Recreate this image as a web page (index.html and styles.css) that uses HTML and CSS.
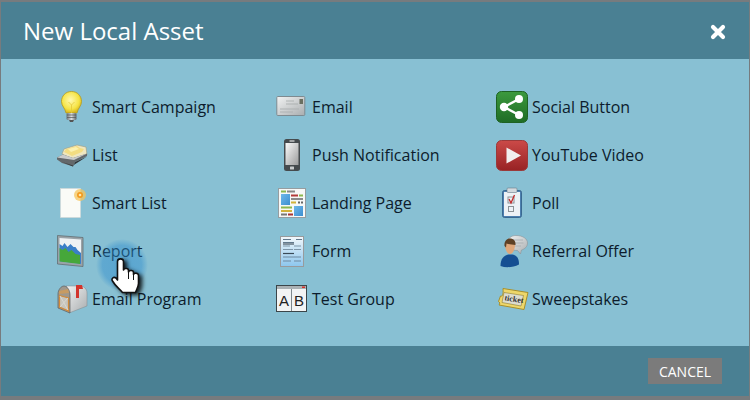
FILE: index.html
```html
<!DOCTYPE html>
<html lang="en">
<head>
<meta charset="utf-8">
<title>New Local Asset</title>
<link rel="stylesheet" href="styles.css">
</head>
<body>
<div class="dialog">
  <header class="head">
    <h1 class="title">New Local Asset</h1>
    <svg class="close" width="16" height="16" viewBox="0 0 16 16"><path d="M3 3L13 13M13 3L3 13" stroke="#fff" stroke-width="4.2" stroke-linecap="round"/></svg>
  </header>
  <main class="grid">
    <div class="item"><svg class="icon" viewBox="0 0 36 36">
      <defs>
        <radialGradient id="bulb" cx=".45" cy=".4" r=".6"><stop offset="0" stop-color="#fff9b0"/><stop offset=".7" stop-color="#f6e445"/><stop offset="1" stop-color="#d9b81e"/></radialGradient>
        <linearGradient id="metal" x1="0" x2="1" y1="0" y2="0"><stop offset="0" stop-color="#6d7478"/><stop offset=".5" stop-color="#d8dcdd"/><stop offset="1" stop-color="#5e6468"/></linearGradient>
        <linearGradient id="grn" x1="0" x2="0" y1="0" y2="1"><stop offset="0" stop-color="#3c9a3e"/><stop offset="1" stop-color="#1f6c25"/></linearGradient>
        <linearGradient id="red" x1="0" x2="0" y1="0" y2="1"><stop offset="0" stop-color="#cb4a48"/><stop offset="1" stop-color="#982224"/></linearGradient>
        <linearGradient id="sil" x1="0" x2="1" y1="0" y2="1"><stop offset="0" stop-color="#f2f3f3"/><stop offset="1" stop-color="#a9adaf"/></linearGradient>
        <linearGradient id="scr" x1="0" x2="1" y1="0" y2="1"><stop offset="0" stop-color="#fafafa"/><stop offset="1" stop-color="#9c9c9c"/></linearGradient>
        <linearGradient id="blu" x1="0" x2="1" y1="0" y2="1"><stop offset="0" stop-color="#6db7ea"/><stop offset="1" stop-color="#3d8fd0"/></linearGradient>
        <linearGradient id="pale" x1="0" x2="0" y1="0" y2="1"><stop offset="0" stop-color="#f3f8fb"/><stop offset="1" stop-color="#8cc6ee"/></linearGradient>
      </defs>
      <path d="M15.500 2.500C9.500 2.500 5.500 7 5.500 12.500c0 4.500 3.500 6.500 4.500 11.500h11c1-5 4.500-7 4.500-11.500 0-5.500-4-10-10-10z" fill="url(#bulb)" stroke="#b59a1c" stroke-width=".8"/>
      <path d="M12.500 13l3 3 3-3M15.500 16v8" fill="none" stroke="#e3c93a" stroke-width=".8"/>
      <rect x="10.500" y="24" width="10" height="7" rx="1.500" fill="url(#metal)"/>
      <path d="M11 26h9M11 28.500h9" stroke="#555" stroke-width=".7"/>
      <path d="M13 31h5l-1 2h-3z" fill="#555"/>
    </svg><span class="label">Smart Campaign</span></div>
    <div class="item"><svg class="icon" viewBox="0 0 36 36">
      <path d="M6 17l2-5 13-4 9 2 1 8-13 5z" fill="#efe7c0" stroke="#9d9a80" stroke-width=".6"/>
      <path d="M8 15l2-3 11-3 3 2 4 1-2 3-10 4z" fill="#f3dd82"/>
      <path d="M12 12l8-2 3 2-8 3z" fill="#fbf1b0"/>
      <path d="M1 20.500L7 17.500l10 3.500 14-4.500v2.500L19 25 17 29.500 6 26 1 22.500z" fill="#63686b"/>
      <path d="M1 20.500L7 17.500l10 3.500 14-4.500-13 6.500z" fill="#c9cbcc"/>
      <path d="M6 25l11 3.500 14-9-12 5.500-2 4.500z" fill="#33373a"/>
    </svg><span class="label">List</span></div>
    <div class="item"><svg class="icon" viewBox="0 0 36 36">
      <rect x="4.500" y="3.500" width="20" height="29" fill="#fafbf7" stroke="#d4d8d6" stroke-width=".6"/>
      <circle cx="24" cy="10" r="6" fill="#f5c65c" opacity=".75"/>
      <circle cx="24" cy="10" r="3" fill="#f39a1f"/>
      <circle cx="24" cy="10" r="1.300" fill="#ffe9a8"/>
    </svg><span class="label">Smart List</span></div>
    <div class="item"><svg class="icon" viewBox="0 0 36 36">
      <path d="M1.500 2.500L27 4.500v29L1.500 31z" fill="#9aa3a8" stroke="#5c6468" stroke-width=".7"/>
      <path d="M3.500 5L25 6.500V31L3.500 28.500z" fill="#eef2f4"/>
      <path d="M3.500 11l3 2 2-3 3 4 3-3 3 3 2 0 2 3 3.500 3V31L3.500 28.500z" fill="#3a7fc8"/>
      <path d="M3.500 15l3 2 3-2 3 4 3-2 4 4 4.500 1V31L3.500 28.500z" fill="#46a73a"/>
    </svg><span class="label">Report</span></div>
    <div class="item"><svg class="icon" viewBox="0 0 36 36">
      <path d="M10 5h14c4 0 7 3 7 7v13L13 32V14c0-4-2-8-3-9z" fill="url(#sil)" stroke="#81878a" stroke-width=".5"/>
      <path d="M2 13c0-4 3-8 6-8s6 4 6 9v18L2 27z" fill="#a0988c" stroke="#5d5d5d" stroke-width=".7"/>
      <path d="M3.500 14.500L12.500 17v13L3.500 26z" fill="#c7c5bd" stroke="#d08a3a" stroke-width="1.200"/>
      <path d="M4 15l8 14M12 17L4 26" stroke="#d9d7d0" stroke-width="1"/>
      <path d="M3 10l9-2 1 4-10 1z" fill="#c79b62"/>
      <path d="M20 4h6l1 4h-4l0 9h-3z" fill="#d2342c"/>
    </svg><span class="label">Email Program</span></div>

    <div class="item"><svg class="icon" viewBox="0 0 36 36">
      <rect x=".8" y="7.500" width="28" height="19" rx="1" fill="url(#sil)" stroke="#7e8a90" stroke-width="1"/>
      <path d="M4 20h19M4 23h13" stroke="#aeb2b3" stroke-width="1"/>
      <path d="M10 12h8M10 15h12" stroke="#a5a9aa" stroke-width=".8"/>
      <rect x="23.500" y="10" width="3.500" height="5" fill="#6a6f60"/>
    </svg><span class="label">Email</span></div>
    <div class="item"><svg class="icon" viewBox="0 0 36 36">
      <rect x="8" y="2" width="16" height="32" rx="2.500" fill="#454a4d"/>
      <rect x="9.500" y="6" width="13" height="22" fill="url(#scr)"/>
      <rect x="13.500" y="3.500" width="5" height="1" fill="#fff"/>
      <rect x="14" y="29.500" width="4" height="3" rx=".5" fill="#c8cbcc"/>
    </svg><span class="label">Push Notification</span></div>
    <div class="item"><svg class="icon" viewBox="0 0 36 36">
      <rect x="2.500" y="3.500" width="27" height="29" fill="#f7f8f7" stroke="#969da0"/>
      <rect x="5" y="5.500" width="5" height="2" fill="#8cb74f"/><rect x="11" y="5.500" width="8" height="2" fill="#888"/>
      <rect x="5" y="9" width="9" height="11" fill="url(#blu)"/>
      <rect x="15" y="9.500" width="7" height="2" fill="#b33a3a"/><rect x="23" y="9.500" width="4" height="2" fill="#8cb74f"/>
      <rect x="15" y="13" width="12" height="2" fill="#8a8a8a"/>
      <rect x="15" y="16.500" width="5" height="2" fill="#d2b23b"/><rect x="22" y="16.500" width="2" height="2" fill="#666"/><rect x="25" y="16.500" width="2" height="2" fill="#666"/>
      <rect x="5" y="21.500" width="11" height="2" fill="#8cb74f"/>
      <rect x="5" y="25" width="11" height="2" fill="#d2b23b"/>
      <rect x="5" y="28.500" width="6" height="2" fill="#777"/><rect x="12" y="28.500" width="5" height="2" fill="#a83333"/>
      <rect x="18" y="21" width="9" height="10" fill="url(#blu)"/>
    </svg><span class="label">Landing Page</span></div>
    <div class="item"><svg class="icon" viewBox="0 0 36 36">
      <rect x="4.500" y="3.500" width="23" height="30" fill="url(#pale)" stroke="#989b9d"/>
      <path d="M7 6.500h8M20 6.500h6M7 9.500h11" stroke="#62798c" stroke-width="1.200"/>
      <path d="M7 13h7M18 13h7M7 16.500h10M18 16.500h7" stroke="#7d95a8" stroke-width="1"/>
      <path d="M7 20.500h11" stroke="#3a4a58" stroke-width="1.200"/>
      <path d="M7 24h18M7 28h8M18 28h7" stroke="#6c89a0" stroke-width="1"/>
      <path d="M7 11h11" stroke="#2c3a46" stroke-width="1"/>
    </svg><span class="label">Form</span></div>
    <div class="item"><svg class="icon" viewBox="0 0 36 36">
      <rect x=".5" y="4.500" width="30" height="26" fill="#f2f4f4" stroke="#3b4549"/>
      <rect x="1" y="5" width="29" height="3" fill="#aab1b4"/>
      <rect x="26" y="5.500" width="3" height="1.500" fill="#d8312a"/>
      <path d="M15.500 8v22" stroke="#7f888c"/>
      <text class="ab" x="3" y="24.500">A</text><text class="ab" x="18" y="24.500">B</text>
    </svg><span class="label">Test Group</span></div>

    <div class="item"><svg class="icon" viewBox="0 0 36 36">
      <rect x=".5" y="2.500" width="31" height="31" rx="5" fill="url(#grn)" stroke="#1e6223"/>
      <path d="M8 18L23 10M8 18l15 8" stroke="#fff" stroke-width="2.400"/>
      <circle cx="8" cy="18" r="4.200" fill="#fff"/><circle cx="23" cy="10" r="4" fill="#fff"/><circle cx="23" cy="26" r="4" fill="#fff"/>
    </svg><span class="label">Social Button</span></div>
    <div class="item"><svg class="icon" viewBox="0 0 36 36">
      <rect x=".5" y="3.500" width="31" height="30" rx="5" fill="url(#red)" stroke="#9a3a3a"/>
      <path d="M10.500 10.500L25 18.500 10.500 26.500z" fill="#f1eeee"/>
    </svg><span class="label">YouTube Video</span></div>
    <div class="item"><svg class="icon" viewBox="0 0 36 36">
      <rect x="6.500" y="5.500" width="19" height="27" rx="2" fill="#4d80b0" stroke="#2f5a85" stroke-width=".8"/>
      <rect x="8" y="7" width="16" height="24" fill="#edf2f6"/>
      <rect x="11" y="3" width="10" height="4.500" rx="1" fill="#d3dadf" stroke="#6a7b88" stroke-width=".6"/>
      <rect x="12" y="12" width="6" height="6" fill="none" stroke="#8b9296"/>
      <path d="M13 14l2 4 3.500-8" fill="none" stroke="#c32a2a" stroke-width="1.300"/>
      <rect x="12.500" y="21.500" width="5" height="5" fill="none" stroke="#8b9296"/>
    </svg><span class="label">Poll</span></div>
    <div class="item"><svg class="icon" viewBox="0 0 36 36">
      <path d="M20 2.500c6.500 0 11.500 3 11.500 7.500 0 3.500-2.500 6-6 7l-1 4-3-3.500c-6 0-10-3-10-7.500s3.500-7.500 8.500-7.500z" fill="url(#sil)" stroke="#8b9499" stroke-width=".6"/>
      <path d="M15 7h12M14.500 10h13M16 13h9" stroke="#a4abae" stroke-width=".8"/>
      <path d="M4.500 33c0-7 3-10.500 8-11.500h4c5 1 6.500 4.500 6.500 10-6 3-13 3.500-18.500 1.500z" fill="#154f92"/>
      <path d="M9 12c0-4 2.500-5.500 5-5.500 3 0 5 1.500 5 5.500 0 4-2 9-5 9s-5-5-5-9z" fill="#dfa77a"/>
      <path d="M8.500 13c-.5-4.500 2-7.500 5.500-7.500s6 2.500 5.500 6.500c-3 0-7-1-9-1.500l-.5 4z" fill="#5e4125"/>
    </svg><span class="label">Referral Offer</span></div>
    <div class="item"><svg class="icon" viewBox="0 0 36 36">
      <path d="M7 7.500l25 4-4 17-25-4.500c1-1 1-3-.5-3.500L4.500 15c2 .5 3-1 2.500-7.500z" fill="#eed76a" stroke="#a88f2b"/>
      <path d="M8 11.500l19.500 3-2.500 10.500-19-3.500z" fill="#dcdccf" stroke="#8d7c2e" stroke-width=".6"/>
      <text class="ticket" x="8.500" y="20.500" transform="rotate(9 16 18)">ticket</text>
    </svg><span class="label">Sweepstakes</span></div>
  </main>
  <footer class="foot"><button class="cancel" type="button">CANCEL</button></footer>
  <div class="ripple"></div>
  <svg class="hand" width="36" height="42" viewBox="108 255 36 42"><path d="M117.500 261.500c0-3.500 6-3.500 6 0V270c.5-2 5-2 5 .5V272c.5-2 5-2 5 .5V274.500c.5-2 5-1.500 5 1v8c0 3-2 6-3 9h-13c-2-3-7-6-10-11.500-1.500-2.500 1-4.500 3.500-3l1.500 2z" fill="#fff" stroke="#111" stroke-width="1.600" stroke-linejoin="round"/><path d="M128.500 271v8M133.500 273v7" stroke="#111" stroke-width="1"/></svg>
</div>
</body>
</html>
```
FILE: styles.css
```css
html, body {
  margin: 0;
  padding: 0;
}
body {
  width: 750px;
  height: 400px;
  overflow: hidden;
  font-family: "Open Sans", sans-serif;
}
.dialog {
  position: relative;
  box-sizing: border-box;
  width: 750px;
  height: 400px;
  display: flex;
  flex-direction: column;
  border-style: solid;
  border-color: #777b7e;
  border-width: 2px 1px 4px;
  background: #88c0d3;
}
.head {
  height: 57px;
  flex: none;
  display: flex;
  align-items: center;
  justify-content: space-between;
  padding: 0 22px;
  background: #4a8093;
}
.title {
  margin: 0;
  font-size: 24px;
  font-weight: 400;
  color: #fff;
}
.close {
  display: block;
  margin-top: 3px;
  margin-right: 1px;
}
.grid {
  flex: 1;
  display: grid;
  grid-auto-flow: column;
  grid-template-rows: repeat(5, 48px);
  grid-auto-columns: 220px;
  padding: 24px 0 0 55px;
}
.item {
  display: flex;
  align-items: center;
}
.icon {
  width: 36px;
  height: 36px;
  flex: none;
  display: block;
}
.label {
  font-size: 16px;
  color: #0d1c2c;
}
.ab {
  font-family: "Liberation Sans", sans-serif;
  font-size: 15px;
  fill: #222;
}
.ticket {
  font-family: "Liberation Serif", serif;
  font-size: 8px;
  font-weight: 700;
  fill: #333;
}
.foot {
  height: 50px;
  flex: none;
  box-sizing: border-box;
  display: flex;
  justify-content: flex-end;
  align-items: flex-start;
  padding: 12px 27px 0 0;
  background: #4a8093;
}
.cancel {
  width: 74px;
  height: 26px;
  padding: 0;
  border: 0;
  background: #7b7b7b;
  color: #fff;
  font-family: "Open Sans", sans-serif;
  font-size: 14px;
}
.ripple {
  position: absolute;
  left: 95px;
  top: 237px;
  width: 52px;
  height: 52px;
  border-radius: 50%;
  background: radial-gradient(circle closest-side, rgba(46, 140, 205, .5) 0, rgba(46, 140, 205, .45) 75%, rgba(46, 140, 205, 0) 100%);
}
.hand {
  position: absolute;
  left: 107px;
  top: 253px;
  filter: drop-shadow(3px 2px 2px rgba(0, 0, 0, .85));
}
```
